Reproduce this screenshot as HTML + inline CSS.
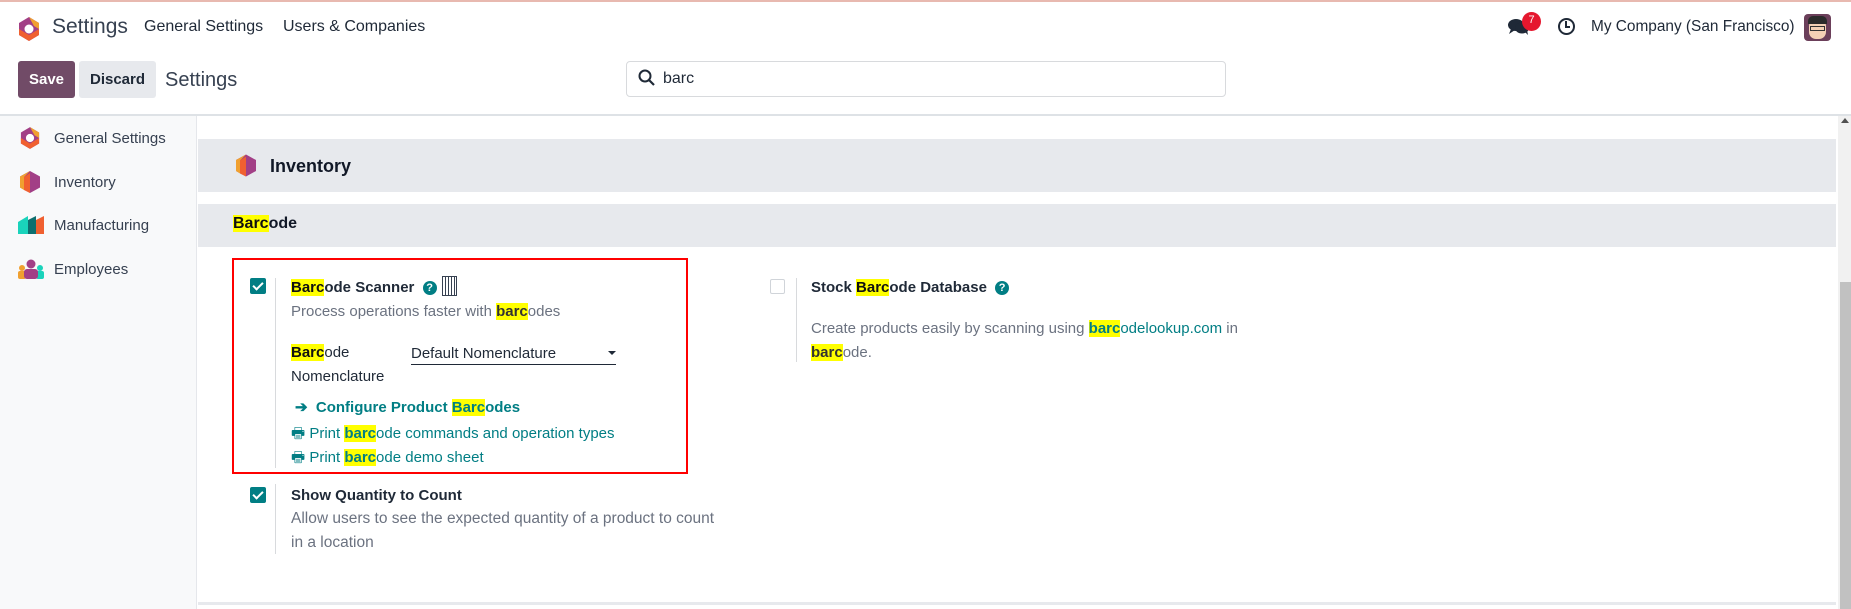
<!DOCTYPE html>
<html><head><meta charset="utf-8"><style>
*{box-sizing:border-box;margin:0;padding:0}
body{width:1851px;height:609px;overflow:hidden;font-family:"Liberation Sans",sans-serif;color:#374151;background:#fff;position:relative;font-size:15px}
.a{position:absolute;white-space:nowrap}
.hl{background:#ffff00;color:#111}
.teal{color:#017e84}
.cb{position:absolute;width:16px;height:16px;background:#017e84;border-radius:2px}
.cb::after{content:"";position:absolute;left:5px;top:2px;width:4px;height:8px;border:solid #fff;border-width:0 2px 2px 0;transform:rotate(45deg)}
</style></head><body>
<div class="a" style="left:0;top:0;width:1851px;height:2px;background:#e8b9b0"></div>
<svg class="a" style="left:18px;top:17px" width="22" height="24" viewBox="0 0 22 24"><polygon points="11,0 21,6 21,18 11,24 1,18 1,6" fill="#a23f86"/><polygon points="1,12 1,18 11,24 21,18 21,12 11,18" fill="#f06030"/><polygon points="11,0 21,6 21,12 16,9" fill="#f0a030"/><circle cx="11" cy="12" r="4.5" fill="#fff"/></svg>
<div class="a" style="left:52px;top:15px;font-size:21px;color:#374151">Settings</div>
<div class="a" style="left:144px;top:18px;font-size:16px;color:#1f2937">General Settings</div>
<div class="a" style="left:283px;top:18px;font-size:16px;color:#1f2937">Users &amp; Companies</div>
<svg class="a" style="left:1508px;top:18px" width="22" height="18" viewBox="0 0 22 18"><ellipse cx="8" cy="7" rx="8" ry="6" fill="#1f2937"/><ellipse cx="14" cy="10" rx="7" ry="5.5" fill="#1f2937"/><path d="M3 11 L1 16 L7 12Z M17 14 L20 17 L19 12Z" fill="#1f2937"/></svg>
<div class="a" style="left:1522px;top:12px;width:19px;height:19px;border-radius:50%;background:#e5172e;color:#fff;font-size:11px;text-align:center;line-height:17px">7</div>
<div class="a" style="left:1558px;top:18px;width:17px;height:17px;border:2.5px solid #1f2937;border-radius:50%"></div>
<div class="a" style="left:1565px;top:21px;width:2px;height:6px;background:#1f2937"></div>
<div class="a" style="left:1565px;top:26px;width:5px;height:2px;background:#1f2937"></div>
<div class="a" style="left:1591px;top:18px;font-size:15.4px;color:#1f2937">My Company (San Francisco)</div>
<div class="a" style="left:1804px;top:14px;width:27px;height:27px;border-radius:4px;background:#6b3f5a;overflow:hidden"><div style="position:absolute;left:5px;top:5px;width:17px;height:20px;border-radius:7px;background:#f3d0b5"></div><div style="position:absolute;left:4px;top:2px;width:19px;height:8px;border-radius:5px 5px 0 0;background:#2b2b2b"></div><div style="position:absolute;left:6px;top:12px;width:15px;height:5px;border:1.5px solid #333"></div></div>
<div class="a" style="left:18px;top:61px;width:57px;height:37px;background:#714b67;border-radius:3px;color:#fff;font-weight:bold;font-size:15px;text-align:center;line-height:37px">Save</div>
<div class="a" style="left:79px;top:61px;width:77px;height:37px;background:#e7e9ed;border-radius:3px;color:#1f2937;font-weight:bold;font-size:15px;text-align:center;line-height:37px">Discard</div>
<div class="a" style="left:165px;top:69px;font-size:20px;color:#374151">Settings</div>
<div class="a" style="left:626px;top:61px;width:600px;height:36px;border:1px solid #d8dadd;border-radius:4px"></div>
<svg class="a" style="left:638px;top:69px" width="18" height="18" viewBox="0 0 18 18"><circle cx="7" cy="7" r="5.5" fill="none" stroke="#1f2937" stroke-width="2"/><line x1="11" y1="11" x2="16" y2="16" stroke="#1f2937" stroke-width="2.2"/></svg>
<div class="a" style="left:663px;top:70px;font-size:16px;color:#1f2937">barc</div>
<div class="a" style="left:0;top:114px;width:1851px;height:2px;background:#dee2e6"></div>
<div class="a" style="left:0;top:116px;width:197px;height:493px;background:#f8f9fa;border-right:1px solid #e5e7eb"></div>
<svg class="a" style="left:20px;top:127px" width="20" height="22" viewBox="0 0 22 24"><polygon points="11,0 21,6 21,18 11,24 1,18 1,6" fill="#a23f86"/><polygon points="1,12 1,18 11,24 21,18 21,12 11,18" fill="#f06030"/><polygon points="11,0 21,6 21,12 16,9" fill="#f0a030"/><circle cx="11" cy="12" r="4.5" fill="#fff"/></svg>
<div class="a" style="left:54px;top:130px;font-size:15px">General Settings</div>
<svg class="a" style="left:20px;top:171px" width="20" height="22" viewBox="0 0 20 22"><polygon points="10,0 20,5.5 20,16.5 10,22 0,16.5 0,5.5" fill="#a23f86"/><polygon points="10,0 0,5.5 0,16.5 4,19 4,6" fill="#f0a030"/><polygon points="4,6 10,2 10,22 4,19" fill="#f06030"/></svg>
<div class="a" style="left:54px;top:174px;font-size:15px">Inventory</div>
<svg class="a" style="left:18px;top:216px" width="26" height="18" viewBox="0 0 26 18"><polygon points="0,6 10,0 10,18 0,18" fill="#1ad3bb"/><polygon points="10,4 18,0 18,18 10,18" fill="#0e6f6f"/><polygon points="18,4 26,0 26,18 18,18" fill="#f06030"/></svg>
<div class="a" style="left:54px;top:217px;font-size:15px">Manufacturing</div>
<svg class="a" style="left:18px;top:259px" width="26" height="20" viewBox="0 0 26 20"><circle cx="13" cy="5" r="4.5" fill="#a23f86"/><circle cx="4" cy="9" r="3" fill="#f0a030"/><circle cx="22" cy="9" r="3" fill="#1ad3bb"/><rect x="0" y="12" width="8" height="8" rx="2" fill="#f0a030"/><rect x="18" y="12" width="8" height="8" rx="2" fill="#1ad3bb"/><rect x="6" y="10" width="14" height="10" rx="3" fill="#a23f86"/></svg>
<div class="a" style="left:54px;top:261px;font-size:15px">Employees</div>
<div class="a" style="left:1838px;top:116px;width:13px;height:493px;background:#f1f1f1"></div>
<div class="a" style="left:1840px;top:282px;width:11px;height:327px;background:#c1c1c1"></div>
<div class="a" style="left:1841px;top:118px;width:0;height:0;border-left:4px solid transparent;border-right:4px solid transparent;border-bottom:5px solid #505050"></div>
<div class="a" style="left:198px;top:139px;width:1638px;height:53px;background:#e7e9ed"></div>
<svg class="a" style="left:236px;top:154px" width="20" height="23" viewBox="0 0 20 22"><polygon points="10,0 20,5.5 20,16.5 10,22 0,16.5 0,5.5" fill="#a23f86"/><polygon points="10,0 0,5.5 0,16.5 4,19 4,6" fill="#f0a030"/><polygon points="4,6 10,2 10,22 4,19" fill="#f06030"/></svg>
<div class="a" style="left:270px;top:156px;font-size:18px;color:#111827;font-weight:bold">Inventory</div>
<div class="a" style="left:198px;top:204px;width:1638px;height:43px;background:#e7e9ed"></div>
<div class="a" style="left:233px;top:215px;font-size:16px;color:#111827;font-weight:bold"><span class="hl">Barc</span>ode</div>
<div class="a" style="left:198px;top:602px;width:1638px;height:3px;background:#e7e9ed"></div>
<div class="a" style="left:232px;top:258px;width:456px;height:216px;border:2px solid #f00"></div>
<div class="cb" style="left:250px;top:278px"></div>
<div class="a" style="left:275px;top:278px;width:1px;height:190px;background:#d8dadd"></div>
<div class="a" style="left:291px;top:279px;font-size:15px;font-weight:bold;color:#1f2937"><span class="hl">Barc</span>ode Scanner <span style="display:inline-block;width:14px;height:14px;border-radius:50%;background:#017e84;color:#fff;font-size:11px;text-align:center;line-height:14px;vertical-align:1px;margin-left:4px">?</span></div>
<div class="a" style="left:442px;top:276px;width:15px;height:20px;border:1.5px solid #374151;background:repeating-linear-gradient(90deg,#fff 0 2px,#374151 2px 3px)"></div>
<div class="a" style="left:291px;top:303px;font-size:15px;color:#6b7280">Process operations faster with <b class="hl" style="color:#333">barc</b>odes</div>
<div class="a" style="left:291px;top:344px;font-size:15px;color:#1f2937"><b class="hl">Barc</b>ode</div>
<div class="a" style="left:291px;top:368px;font-size:15px;color:#1f2937">Nomenclature</div>
<div class="a" style="left:411px;top:345px;font-size:15px;color:#1f2937">Default Nomenclature</div>
<div class="a" style="left:608px;top:351px;border-left:4px solid transparent;border-right:4px solid transparent;border-top:4px solid #1f2937"></div>
<div class="a" style="left:411px;top:364px;width:205px;height:1px;background:#1f2937"></div>
<div class="a teal" style="left:295px;top:398px;font-size:15px;font-weight:bold">➔&nbsp; Configure Product <span class="hl" style="color:#017e84">Barc</span>odes</div>
<div class="a teal" style="left:291px;top:423px;font-size:15px">🖶 Print <b class="hl" style="color:#017e84">barc</b>ode commands and operation types</div>
<div class="a teal" style="left:291px;top:447px;font-size:15px">🖶 Print <b class="hl" style="color:#017e84">barc</b>ode demo sheet</div>
<div class="cb" style="left:250px;top:487px"></div>
<div class="a" style="left:275px;top:484px;width:1px;height:70px;background:#d8dadd"></div>
<div class="a" style="left:291px;top:487px;font-size:15px;font-weight:bold;color:#1f2937">Show Quantity to Count</div>
<div class="a" style="left:291px;top:510px;font-size:15.5px;color:#6b7280">Allow users to see the expected quantity of a product to count</div>
<div class="a" style="left:291px;top:534px;font-size:15.5px;color:#6b7280">in a location</div>
<div class="a" style="left:770px;top:279px;width:15px;height:15px;border:1px solid #d0d4d9;border-radius:2px"></div>
<div class="a" style="left:796px;top:278px;width:1px;height:84px;background:#d8dadd"></div>
<div class="a" style="left:811px;top:279px;font-size:15px;font-weight:bold;color:#1f2937">Stock <span class="hl">Barc</span>ode Database <span style="display:inline-block;width:14px;height:14px;border-radius:50%;background:#017e84;color:#fff;font-size:11px;text-align:center;line-height:14px;vertical-align:1px;margin-left:4px">?</span></div>
<div class="a" style="left:811px;top:320px;font-size:15px;color:#6b7280">Create products easily by scanning using <span class="teal"><b class="hl" style="color:#017e84">barc</b>odelookup.com</span> in</div>
<div class="a" style="left:811px;top:344px;font-size:15px;color:#6b7280"><b class="hl" style="color:#333">barc</b>ode.</div>
</body></html>
